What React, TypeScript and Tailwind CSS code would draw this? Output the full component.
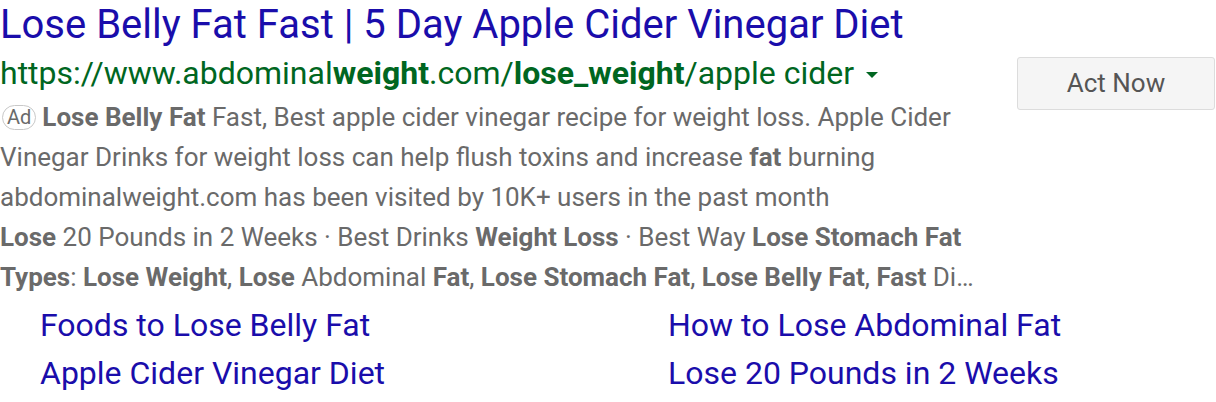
import React from "react";

const sitelinks = [
  "Foods to Lose Belly Fat",
  "How to Lose Abdominal Fat",
  "Apple Cider Vinegar Diet",
  "Lose 20 Pounds in 2 Weeks",
];

export default function App() {
  return (
    <div className="w-[1216px] h-[402px] pt-[1px] bg-white overflow-hidden font-['Roboto',sans-serif]">
      <div className="flex">
        <div className="flex-1">
          <h1 className="text-[40px] leading-[48px] text-[#1a0dab] whitespace-nowrap">
            Lose Belly Fat Fast | 5 Day Apple Cider Vinegar Diet
          </h1>
          <div className="flex items-center text-[32px] leading-[48px] text-[#006621] whitespace-nowrap">
            <span>
              https://www.abdominal<b>weight</b>.com/<b>lose_weight</b>/apple cider
            </span>
            <span className="ml-3 mt-1 border-x-[6px] border-t-[6px] border-x-transparent border-t-[#006621]"></span>
          </div>
          <div className="text-[26px] leading-[40px] text-[#6a6a6a]">
            <p>
              <span className="inline-block mr-[6px] ml-[2px] px-[4px] border border-[#c8c8c8] rounded-full text-[20px] leading-[23px] align-[2px]">
                Ad
              </span>
              <b>Lose Belly Fat</b> Fast, Best apple cider vinegar recipe for weight loss. Apple Cider
            </p>
            <p>
              Vinegar Drinks for weight loss can help flush toxins and increase <b>fat</b> burning
            </p>
            <p>abdominalweight.com has been visited by 10K+ users in the past month</p>
            <p className="whitespace-nowrap">
              <b>Lose</b> 20 Pounds in 2 Weeks · Best Drinks <b>Weight Loss</b> · Best Way{" "}
              <b>Lose Stomach Fat</b>
            </p>
            <p className="whitespace-nowrap">
              <b>Types</b>: <b>Lose Weight</b>, <b>Lose</b> Abdominal <b>Fat</b>, <b>Lose Stomach Fat</b>,{" "}
              <b>Lose Belly Fat</b>, <b>Fast</b> Di…
            </p>
          </div>
        </div>
        <button className="self-start mt-[56px] mr-px w-[198px] h-[53px] bg-[#f5f5f5] border border-[#dcdcdc] rounded-[3px] text-[26px] text-[#555]">
          Act Now
        </button>
      </div>
      <div className="grid grid-cols-[628px_1fr] pl-[40px] mt-[4px] text-[32px] leading-[48px] text-[#1a0dab]">
        {sitelinks.map((s) => (
          <div key={s}>{s}</div>
        ))}
      </div>
    </div>
  );
}
